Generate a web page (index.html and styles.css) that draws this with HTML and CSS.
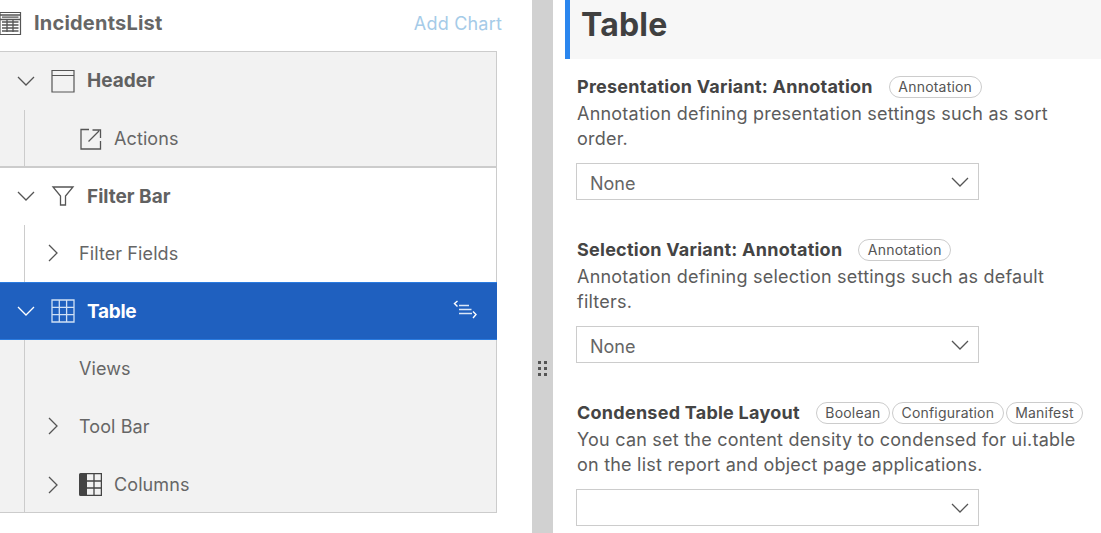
FILE: index.html
```html
<!DOCTYPE html>
<html>
<head>
  <meta charset="UTF-8">
  <title>IncidentsList - Table</title>
  <link rel="stylesheet" href="styles.css">
</head>
<body>

  <div class="left">
    <div class="top">
      <div class="top-name">
        <svg class="page-icon" width="24" height="24" viewBox="0 0 24 24" fill="none" stroke="#555" stroke-width="1.2">
          <path d="M1 1.5h20.5v22H1z"/>
          <path d="M1 4h20.5M1 8.5h20.5" stroke-width="1.4"/>
          <path d="M3 6.2h16.5M3 11h16.5M3 14h16.5M3 17h16.5M3 20h16.5M8 9v12M14 9v12" stroke-width="1.3"/>
        </svg>
        <span>IncidentsList</span>
      </div>
      <span class="add-chart">Add Chart</span>
    </div>

    <div class="tree">
      <div class="row grey head">
        <svg class="chev" width="18" height="10" viewBox="0 0 18 10" fill="none" stroke="#555" stroke-width="1.3"><path d="M1 1l8 8 8-8"/></svg>
        <svg class="icon" width="24" height="24" viewBox="0 0 24 24" fill="none" stroke="#555" stroke-width="1.2"><path d="M1 1.5h22v21.500H1zM1 6.500h22"/></svg>
        <span>Header</span>
      </div>
      <div class="row grey sub rule-bottom">
        <svg class="icon-sub" width="22" height="22" viewBox="0 0 22 22" fill="none" stroke="#555" stroke-width="1.3"><path d="M9 1.500H1v19.500h19.500V13M8.500 13.500L19 3M12.500 2h8v8"/></svg>
        <span>Actions</span>
      </div>
      <div class="row head">
        <svg class="chev" width="18" height="10" viewBox="0 0 18 10" fill="none" stroke="#555" stroke-width="1.3"><path d="M1 1l8 8 8-8"/></svg>
        <svg class="icon" width="24" height="20" viewBox="0 0 24 20" fill="none" stroke="#555" stroke-width="1.3"><path d="M2 1h20l-7.500 9v9h-5v-9z"/></svg>
        <span>Filter Bar</span>
      </div>
      <div class="row sub">
        <svg class="arrow" width="10" height="18" viewBox="0 0 10 18" fill="none" stroke="#555" stroke-width="1.3"><path d="M1 1l8 8-8 8"/></svg>
        <span>Filter Fields</span>
      </div>
      <div class="row head selected">
        <svg class="chev" width="18" height="10" viewBox="0 0 18 10" fill="none" stroke="#fff" stroke-width="1.3"><path d="M1 1l8 8 8-8"/></svg>
        <svg class="icon" width="24" height="24" viewBox="0 0 24 24" fill="none" stroke="#cfe0f5" stroke-width="1.3"><path d="M1 1h22v22H1zM8.300 1v22M15.600 1v22M1 8.300h22M1 15.600h22"/></svg>
        <span>Table</span>
        <svg class="outline-icon" width="24" height="19" viewBox="0 0 24 19" fill="none" stroke="#fff" stroke-width="1.4">
          <path d="M4.500 1L1.500 3.500 4.500 6.500M20 11.500l3 3-3 3.500"/>
          <path d="M6 5.500h10M6 9.500h12.500M6 13.500h13" stroke="#dbe7f7" stroke-width="1.500"/>
        </svg>
      </div>
      <div class="row grey sub">
        <span>Views</span>
      </div>
      <div class="row grey sub">
        <svg class="arrow" width="10" height="18" viewBox="0 0 10 18" fill="none" stroke="#555" stroke-width="1.3"><path d="M1 1l8 8-8 8"/></svg>
        <span>Tool Bar</span>
      </div>
      <div class="row grey sub last">
        <svg class="arrow" width="10" height="18" viewBox="0 0 10 18" fill="none" stroke="#555" stroke-width="1.3"><path d="M1 1l8 8-8 8"/></svg>
        <svg class="icon-cols" width="23" height="23" viewBox="0 0 23 23"><path d="M0 1.500A1.500 1.500 0 0 1 1.500 0H8v23H1.500A1.500 1.500 0 0 1 0 21.500z" fill="#444"/><path d="M8 .6h14.400v21.800H8M15 .6v21.800M8 8h14.400M8 15h14.400" fill="none" stroke="#444" stroke-width="1.3"/></svg>
        <span>Columns</span>
      </div>
    </div>
  </div>

  <div class="splitter">
    <div class="grip"><i></i><i></i><i></i><i></i><i></i><i></i></div>
  </div>

  <div class="right">
    <h1>Table</h1>

    <div class="field">
      <div class="label">
        <b>Presentation Variant: Annotation</b>
        <span class="tags"><span class="tag">Annotation</span></span>
      </div>
      <p>Annotation defining presentation settings such as sort order.</p>
      <div class="select"><span>None</span><svg width="18" height="10" viewBox="0 0 18 10" fill="none" stroke="#555" stroke-width="1.3"><path d="M1 1l8 8 8-8"/></svg></div>
    </div>

    <div class="field">
      <div class="label">
        <b>Selection Variant: Annotation</b>
        <span class="tags"><span class="tag">Annotation</span></span>
      </div>
      <p>Annotation defining selection settings such as default filters.</p>
      <div class="select"><span>None</span><svg width="18" height="10" viewBox="0 0 18 10" fill="none" stroke="#555" stroke-width="1.3"><path d="M1 1l8 8 8-8"/></svg></div>
    </div>

    <div class="field">
      <div class="label">
        <b>Condensed Table Layout</b>
        <span class="tags"><span class="tag">Boolean</span><span class="tag">Configuration</span><span class="tag">Manifest</span></span>
      </div>
      <p>You can set the content density to condensed for ui.table on the list report and object page applications.</p>
      <div class="select"><span></span><svg width="18" height="10" viewBox="0 0 18 10" fill="none" stroke="#555" stroke-width="1.3"><path d="M1 1l8 8 8-8"/></svg></div>
    </div>
  </div>

</body>
</html>
```

FILE: styles.css
```css
html, body { margin: 0; height: 100%; overflow: hidden; }
body { display: flex; background: white; color: #555; font-family: Inter, "Liberation Sans", sans-serif; font-size: 18px; }

.left { width: 532px; flex: none; }
.top { display: flex; justify-content: space-between; align-items: center; height: 46px; padding-right: 30px; }
.top-name { display: flex; align-items: center; gap: 11px; font-size: 20px; letter-spacing: .2px; font-weight: 700; color: #666; }
.page-icon { margin-left: -1px; }
.add-chart { color: #a5cbe8; letter-spacing: .2px; }

.tree { width: 496px; margin-top: 5px; border: 1px solid #ccc; border-left: none; }
.row { position: relative; display: flex; align-items: center; height: 57.5px; box-sizing: border-box; }
.grey { background: #f2f2f2; }
.head { padding-left: 17px; font-size: 19px; font-weight: 700; color: #616161; }
.head .chev { margin-right: 16px; }
.head .icon { margin-right: 12px; }
.sub { padding-left: 79px; color: #666; letter-spacing: .1px; }
.sub::before { content: ""; position: absolute; left: 24px; top: 0; bottom: 0; width: 1px; background: #ccc; }
.rule-bottom { height: 58.5px; border-bottom: 2px solid #ccc; padding-top: 2px; }
.rule-bottom + .row { height: 56.5px; }
.last { height: 57px; padding-top: 2px; }
.icon-sub { margin: 0 12px 0 1px; }
.icon-cols { margin-right: 12px; }
.arrow { position: absolute; left: 48px; }

.selected { height: 58px; background: #1f60bf; color: white; border-top: 1px solid #2a7be0; border-bottom: 1px solid #2a7be0; margin-right: -1px; letter-spacing: -.3px; }
.outline-icon { position: absolute; right: 20px; top: 17px; }

.splitter { width: 21px; flex: none; background: #d1d1d1; display: flex; justify-content: center; padding-top: 361px; box-sizing: border-box; }
.grip { display: grid; grid-template-columns: 3px 3px; gap: 3px; height: 14px; align-content: start; }
.grip i { width: 3px; height: 3px; background: #555; }

.right { flex: 1; min-width: 0; padding-left: 12px; }
h1 { margin: 0 0 15px; height: 59px; box-sizing: border-box; background: #f7f7f7; border-left: 5px solid #2b86ee; padding-left: 11px; font-size: 32px; line-height: 49px; letter-spacing: .2px; color: #404040; font-weight: 700; }

.field { margin: 0 0 37px 12px; width: 510px; }
.label { display: flex; align-items: center; gap: 16px; height: 25px; white-space: nowrap; }
.label b { color: #444; font-weight: 700; letter-spacing: .25px; }
.tags { display: flex; gap: 2px; }
.tag { border: 1px solid #ccc; border-radius: 11px; padding: 0 8.5px; font-size: 14px; line-height: 20px; letter-spacing: .2px; color: #555; }
p { margin: 2px 0 12px; line-height: 25px; letter-spacing: .22px; color: #5c5c5c; width: 505px; }
.select { display: flex; justify-content: space-between; align-items: center; box-sizing: border-box; width: 403px; height: 37px; margin-left: -1px; border: 1px solid #ccc; padding: 0 9px 0 13px; color: #666; }
.select span { padding-top: 3px; }
```
